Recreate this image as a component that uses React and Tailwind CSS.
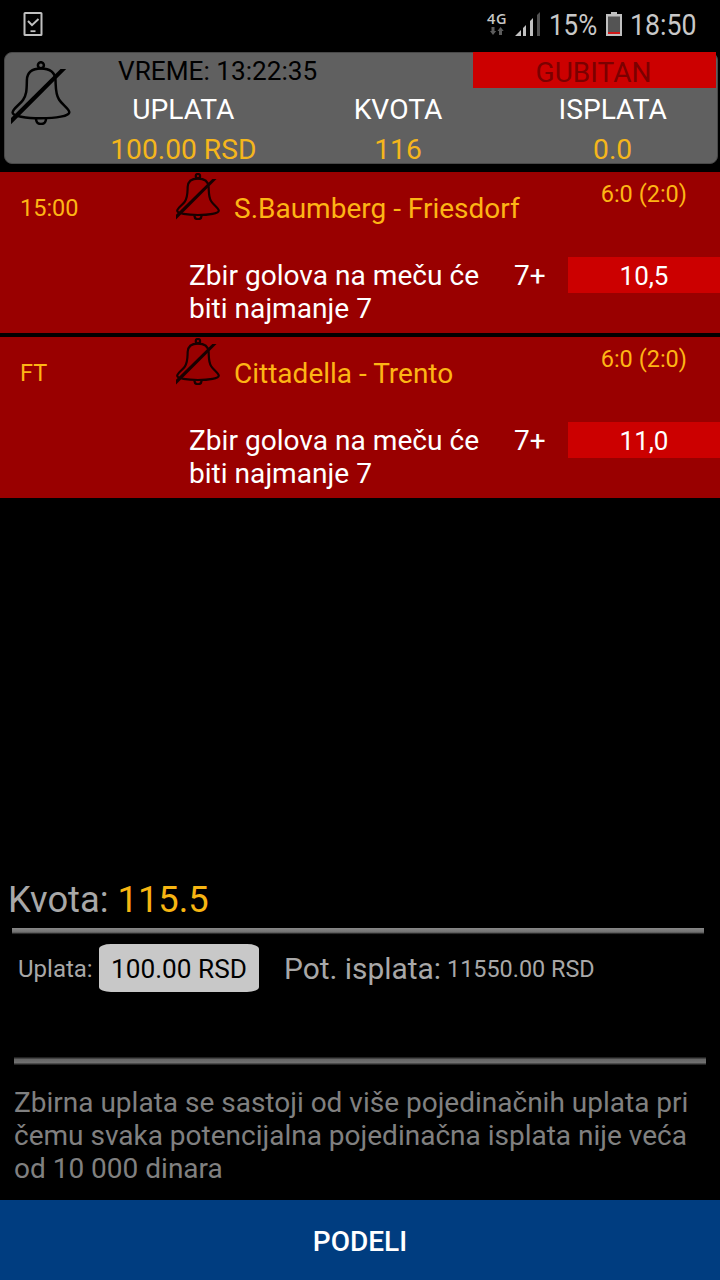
function MutedBell({ className, weight = 2.5 }) {
  return (
    <svg viewBox="0 0 60 64" fill="none" stroke="currentColor" className={className}>
      <circle cx="29.9" cy="4.2" r="3" strokeWidth={weight} />
      <path
        d="M29.9 7.6C21 7.6 16.2 11.5 15.9 19C15.6 28 16 33 12 39C9 43.500 2 47.500 1.600 51.500C1.500 55 15 57.200 29.900 57.200C45 57.200 58.500 55 58.300 51.200C58 47.500 51 43.500 48 38.500C44.500 33 44.900 28 44.500 19C44 11.500 39 7.600 29.900 7.600Z"
        strokeWidth={weight}
      />
      <path d="M25 58C25.300 61.500 27 63 30 63S34.700 61.500 35 58" strokeWidth={weight} />
      <path d="M0 57L49.500 8H55.200L0 63.200Z" fill="currentColor" stroke="none" />
    </svg>
  );
}

function StatusBar() {
  return (
    <div className="flex h-[52px] shrink-0 justify-between pl-[23px] pr-[24px] text-[#c8c8c8]">
      <svg width="20" height="24" viewBox="0 0 20 24" fill="none" stroke="#c0c0c0" className="mt-[12px]">
        <rect x="1.500" y="1" width="17" height="22" rx="0.600" strokeWidth="2" />
        <path d="M5 9L9 13.200L15.500 7" strokeWidth="2" />
        <path d="M7.500 19.200H12.500" strokeWidth="1.800" />
      </svg>
      <div className="flex pt-[8px]">
        <div className="-ml-px flex w-[20px] flex-col items-center pt-[4px]">
          <span className="font-['Open_Sans',sans-serif] text-[14.500px] font-semibold leading-[13px] tracking-[0.5px]">4G</span>
          <svg width="14" height="8" viewBox="0 0 14 8" fill="#5c5c5c" className="mt-[2px]">
            <path d="M1.500 0H4.500V4H6.200L3 8L0 4H1.500ZM9 8V4H7.500L10.500 0L13.700 4H12V8Z" />
          </svg>
        </div>
        <svg width="26" height="24" viewBox="0 0 26 24" fill="#c0c0c0" className="ml-[8px] mt-[4px]">
          <path d="M0 24L6 18V24ZM8 16L11 13V24H8ZM15 9L18 6V24H15Z" />
          <path d="M22 3L25 0V24H22Z" fill="#505050" />
        </svg>
        <div className="-mt-px ml-[8px] w-[50px]">
          <span className="inline-block origin-left scale-x-[0.865] text-[30px] leading-[35px]">15%</span>
        </div>
        <svg width="16" height="24" viewBox="0 0 16 24" className="ml-[7px] mt-[4px]">
          <path d="M5 0H11V2H16V24H0V2H5Z" fill="#c0c0c0" />
          <rect x="2" y="4.500" width="12" height="17.500" fill="#545454" />
          <rect x="2" y="20" width="12" height="2" fill="#d01818" />
        </svg>
        <div className="-mt-px ml-[8px] w-[66px]">
          <span className="inline-block origin-left scale-x-[0.890] text-[30px] leading-[35px]">18:50</span>
        </div>
      </div>
    </div>
  );
}

const totals = [
  { label: "UPLATA", value: "100.00 RSD" },
  { label: "KVOTA", value: "116" },
  { label: "ISPLATA", value: "0.0" },
];

function TicketHeader() {
  return (
    <div className="ml-[4px] mr-[2px] flex h-[112px] shrink-0 rounded-[8px] border border-[#484848] bg-[#606060]">
      <MutedBell className="ml-[6px] mt-[8px] h-[64px] w-[60px] shrink-0" />
      <div className="flex-1">
        <div className="-mt-px flex h-[36px] justify-between pr-px">
          <div className="pl-[47px] pt-[3px] text-[26.200px] leading-[32px] whitespace-nowrap">VREME: 13:22:35</div>
          <div className="h-[36px] w-[243px] bg-[#cc0000] pr-[2px] pt-[4px] text-center text-[28px] leading-[33px] text-[#7b0000]">
            GUBITAN
          </div>
        </div>
        <div className="-mr-[3px] ml-[5px] grid grid-cols-3 text-center text-[28.200px]">
          {totals.map((t) => (
            <div key={t.label}>
              <div className="h-[40px] pt-[5px] leading-[34px] text-white">{t.label}</div>
              <div className="pt-[5px] leading-[34px] text-[#f5b61c]">{t.value}</div>
            </div>
          ))}
        </div>
      </div>
    </div>
  );
}

const matches = [
  { time: "15:00", teams: "S.Baumberg - Friesdorf", odds: "10,5" },
  { time: "FT", teams: "Cittadella - Trento", odds: "11,0" },
];

function MatchRow({ time, teams, odds }) {
  return (
    <div className="h-[161px] bg-[#990000] text-[#fdb515]">
      <div className="flex h-[85px]">
        <div className="w-[176px] pl-[20px] pt-[20px] text-[23.500px] leading-[32px]">{time}</div>
        <MutedBell weight={3} className="mt-[1px] h-[47px] w-[44px] text-[#180000]" />
        <div className="flex-1 pl-[14px] pt-[20px] text-[28px] leading-[34px] whitespace-nowrap">{teams}</div>
        <div className="pr-[33px] pt-[6px] text-[23.500px] leading-[32px]">6:0 (2:0)</div>
      </div>
      <div className="flex text-white">
        <div className="ml-[189px] w-[325px] pt-[2px] text-[28.100px] leading-[33px]">
          Zbir golova na meču će
          <br />
          biti najmanje 7
        </div>
        <div className="w-[54px] pt-[2px] text-[28px] leading-[33px]">7+</div>
        <div className="h-[36px] flex-1 bg-[#cc0000] pt-[1px] text-center text-[26px] leading-[36px]">{odds}</div>
      </div>
    </div>
  );
}

function Summary() {
  return (
    <div className="text-[#a8a8a8]">
      <div className="h-[50px] pl-[8px] text-[36.300px] leading-[44px]">
        Kvota: <span className="text-[#f7b512]">115.5</span>
      </div>
      <div className="ml-[12px] mr-[16px] h-[7px] bg-linear-to-b from-[#888] via-[#707070] via-60% to-black" />
      <div className="mt-[9px] flex h-[48px] items-center whitespace-nowrap">
        <div className="w-[99px] pl-[18px] pt-[2px] text-[24px]">Uplata:</div>
        <div className="h-[48px] w-[160px] rounded-[12px/5px] bg-[#c8c8c8] pt-px text-center text-[26.200px] leading-[49px] text-black">
          100.00 RSD
        </div>
        <div className="ml-[25px] w-[163px] pt-[2px] text-[29.900px]">Pot. isplata:</div>
        <div className="pt-[3px] text-[23.400px]">11550.00 RSD</div>
      </div>
      <div className="ml-[14px] mr-[14px] mt-[64px] h-[10px] bg-[linear-gradient(to_bottom,#000_5%,#666_35%,#707070_65%,#000_95%)]" />
      <p className="ml-[14px] mt-[20px] h-[114px] text-[28px] leading-[33px] whitespace-nowrap text-[#808080]">
        Zbirna uplata se sastoji od više pojedinačnih uplata pri
        <br />
        čemu svaka potencijalna pojedinačna isplata nije veća
        <br />
        od 10 000 dinara
      </p>
    </div>
  );
}

export default function App() {
  return (
    <div className="flex h-[1280px] w-[720px] flex-col overflow-hidden bg-black font-[Roboto,sans-serif]">
      <StatusBar />
      <TicketHeader />
      <div className="mt-[8px] flex flex-1 flex-col gap-[4px]">
        {matches.map((m) => (
          <MatchRow key={m.time} {...m} />
        ))}
      </div>
      <Summary />
      <button className="h-[80px] shrink-0 bg-[#003d80] pt-[4px] text-[28px] font-medium text-white">PODELI</button>
    </div>
  );
}
